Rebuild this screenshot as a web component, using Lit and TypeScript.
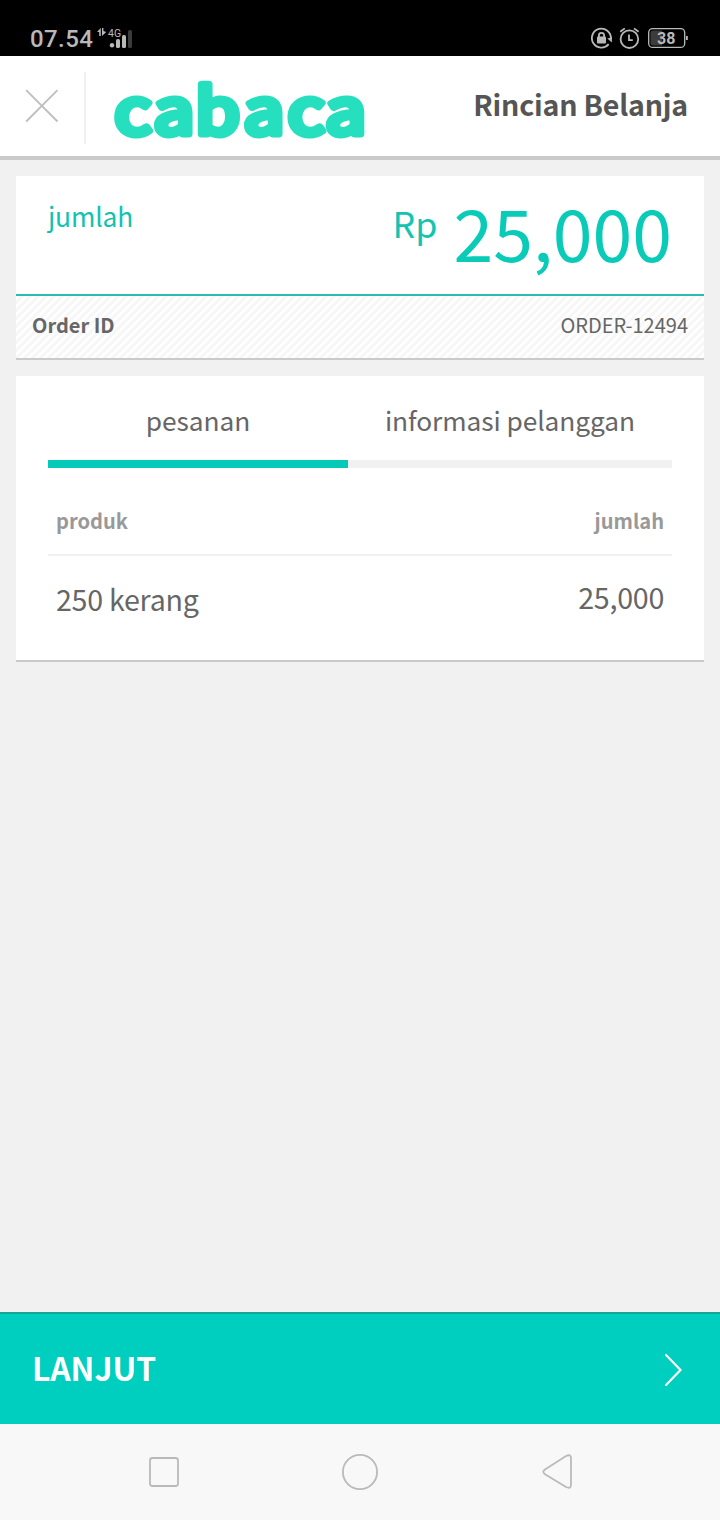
import { LitElement, html, css } from "lit";
import { customElement, property } from "lit/decorators.js";

@customElement("status-bar")
class StatusBar extends LitElement {
  static styles = css`
    :host { display: flex; height: 56px; box-sizing: border-box; padding: 21px 34px 0 30px; background: #000; color: #b9b9b9; align-items: center; justify-content: space-between; font-family: Roboto, sans-serif; }
    .left, .right { display: flex; align-items: center; height: 35px; }
    .clock { font-size: 24px; font-weight: 500; line-height: 35px; letter-spacing: 0.4px; padding-top: 2px; }
    svg { display: block; }
    .signal { margin-left: 4px; }
    .right { gap: 6px; }
  `;
  render() {
    return html`
      <div class="left">
        <span class="clock">07.54</span>
        <svg class="signal" width="38" height="35" viewBox="97 21 38 35" fill="#b9b9b9">
          <path d="M97 32L100.8 28V36H99.2V32ZM102 28H103.4V31L106.2 32L102 36Z" />
          <text x="108" y="37" font-size="10.5" font-family="Roboto, sans-serif">4G</text>
          <circle cx="112" cy="45.3" r="2.2" />
          <rect x="116" y="39" width="4" height="9" rx="1.6" />
          <rect x="122" y="35" width="4" height="13" rx="1.6" />
          <rect x="128" y="30" width="4" height="18" rx="1.6" fill="#3c3c3c" />
        </svg>
      </div>
      <div class="right">
        <svg width="22" height="35" viewBox="591 21 22 35" fill="none" stroke="#b9b9b9" stroke-width="1.8">
          <path d="M608.7 44.2A9.5 9.5 0 1 1 610.9 38.5" />
          <path d="M607.4 38.6L612 37.2L611.8 42.6Z" fill="#b9b9b9" stroke="none" />
          <rect x="597" y="36.5" width="9" height="7" rx="1" fill="#b9b9b9" stroke="none" />
          <path d="M598.9 37V35.4A2.6 2.6 0 0 1 604.1 35.4V37" />
        </svg>
        <svg width="21" height="35" viewBox="619 21 21 35" fill="none" stroke="#b9b9b9" stroke-width="1.8">
          <circle cx="629.4" cy="39.2" r="8.8" />
          <path d="M629 34.5V40.2H632.8M620.2 31.8L624.8 28.4M634 28.4L638.6 31.8" />
        </svg>
        <svg width="40" height="35" viewBox="646 21 40 35" overflow="visible">
          <rect x="648.7" y="28.6" width="36" height="18.8" rx="4" fill="none" stroke="#b9b9b9" stroke-width="1.3" />
          <path d="M686 36H687.8V40H686Z" fill="#b9b9b9" />
          <path d="M653 30.5H662V45.5H653Q650.5 45.5 650.5 43V33Q650.5 30.5 653 30.5Z" fill="#3c3c3c" />
          <text x="666.2" y="44" text-anchor="middle" font-size="16" font-weight="700" fill="#b9b9b9" font-family="Roboto, sans-serif">38</text>
        </svg>
      </div>
    `;
  }
}

@customElement("shop-header")
class ShopHeader extends LitElement {
  @property() heading = "";
  static styles = css`
    :host { display: flex; height: 104px; box-sizing: border-box; background: #fff; border-bottom: 4px solid #cacaca; align-items: center; padding-right: 32px; }
    svg { display: block; }
    .close { display: flex; justify-content: center; width: 84px; height: 72px; align-items: center; border-right: 2px solid #f0f0f0; box-sizing: content-box; margin-top: 4px; }
    .cross { margin-bottom: 4px; }
    .logo { margin-left: 22px; }
    .title { margin-left: auto; font-size: 28.6px; font-weight: 700; color: #555; line-height: 44px; padding-bottom: 5px; letter-spacing: -0.22px; }
  `;
  render() {
    return html`
      <div class="close">
        <svg class="cross" width="34" height="34" viewBox="0 0 34 34" stroke="#bebebe" stroke-width="1.8"><path d="M1.2 1.2L32.5 32.5M32.5 1.2L1.2 32.5" /></svg>
      </div>
      <svg class="logo" width="264" height="100" viewBox="108 56 264 100">
        <text transform="scale(1.16 1)" y="134.4" x="98.8 132.5 168.4 210.1 248 280.6" font-family="'Noto Sans CJK SC', sans-serif" font-weight="400" font-size="62" fill="#26dfbf" stroke="#26dfbf" stroke-width="7" stroke-linejoin="round">cabaca</text>
      </svg>
      <span class="title">${this.heading}</span>
    `;
  }
}

@customElement("amount-card")
class AmountCard extends LitElement {
  static styles = css`
    :host { display: block; background: #fff; border-bottom: 2px solid #cacaca; }
    .total { display: flex; justify-content: space-between; align-items: flex-start; height: 120px; box-sizing: border-box; padding: 0 32px; border-bottom: 2px solid #2bbcab; }
    .label { font-size: 26.4px; line-height: 40px; color: #12c2b1; padding-top: 20px; letter-spacing: -0.15px; }
    .sum { display: flex; align-items: flex-start; color: #0acab8; }
    .currency { font-size: 35.8px; line-height: 50px; padding-top: 21px; color: #14c4b2; }
    .value { font-size: 71.6px; line-height: 80px; padding-top: 15px; margin-left: 16px; }
    .order { display: flex; justify-content: space-between; align-items: center; height: 62px; box-sizing: border-box; padding: 0 16px 6px; color: #666; font-size: 20px; background: linear-gradient(135deg, #fff 25%, #f7f7f7 25%, #f7f7f7 50%, #fff 50%, #fff 75%, #f7f7f7 75%) 0 0 / 8px 8px; }
    .key { font-weight: 700; }
  `;
  render() {
    return html`
      <div class="total">
        <span class="label">jumlah</span>
        <div class="sum"><span class="currency">Rp</span><span class="value">25,000</span></div>
      </div>
      <div class="order"><span class="key">Order ID</span><span class="id">ORDER-12494</span></div>
    `;
  }
}

@customElement("order-card")
class OrderCard extends LitElement {
  static styles = css`
    :host { display: block; height: 286px; box-sizing: border-box; background: #fff; border-bottom: 2px solid #cacaca; padding: 0 32px; color: #666; }
    .tabs { display: grid; grid-template-columns: 300px 324px; }
    .tab { height: 92px; box-sizing: border-box; border-bottom: 8px solid #f1f1f1; text-align: center; font-size: 26.3px; line-height: 40px; padding-top: 24px; letter-spacing: -0.07px; }
    .active { border-color: #06cab8; }
    .row { display: flex; justify-content: space-between; padding: 0 8px; }
    .head { height: 88px; box-sizing: border-box; border-bottom: 2px solid #f0f0f0; padding-top: 37px; font-size: 20.1px; font-weight: 700; line-height: 32px; color: #999; }
    .item { font-size: 28.6px; line-height: 44px; padding-top: 21px; letter-spacing: -0.25px; }
    .price { margin-top: -2px; }
  `;
  render() {
    return html`
      <div class="tabs"><div class="tab active">pesanan</div><div class="tab">informasi pelanggan</div></div>
      <div class="row head"><span>produk</span><span>jumlah</span></div>
      <div class="row item"><span class="name">250 kerang</span><span class="price">25,000</span></div>
    `;
  }
}

@customElement("app-root")
class AppRoot extends LitElement {
  static styles = css`
    :host { display: flex; flex-direction: column; height: 1520px; background: #f1f1f1; font-family: "Noto Sans CJK SC", "Noto Sans CJK JP", sans-serif; }
    .content { flex: 1; display: flex; flex-direction: column; gap: 16px; padding: 16px; }
    .next { display: flex; align-items: center; justify-content: space-between; height: 112px; box-sizing: border-box; background: #00cebe; border-top: 2px solid #16a596; color: #fff; padding: 0 37px 0 32px; }
    .cta { font-size: 31.8px; font-weight: 700; line-height: 48px; padding-bottom: 4px; }
    .nav { display: flex; height: 96px; background: #f8f8f8; align-items: center; justify-content: center; gap: 160px; }
    svg { display: block; }
  `;
  render() {
    return html`
      <status-bar></status-bar>
      <shop-header heading="Rincian Belanja"></shop-header>
      <main class="content"><amount-card></amount-card><order-card></order-card></main>
      <div class="next">
        <span class="cta">LANJUT</span>
        <svg width="20" height="36" viewBox="0 0 20 36" fill="none" stroke="#fff" stroke-width="2.2" stroke-linecap="round"><path d="M3 4L17.5 19L3 34" /></svg>
      </div>
      <div class="nav">
        <svg width="36" height="36" viewBox="0 0 36 36" fill="none" stroke="#bababa" stroke-width="1.8"><rect x="4" y="4" width="28" height="28" rx="2.5" /></svg>
        <svg width="36" height="36" viewBox="0 0 36 36" fill="none" stroke="#bababa" stroke-width="1.8"><circle cx="18" cy="18" r="17.1" /></svg>
        <svg width="36" height="36" viewBox="0 0 36 36" fill="none" stroke="#bababa" stroke-width="1.8"><path d="M7 15.4L28 2Q33 -.2 33 4V31Q33 35.2 28 33L7 20.2Q3.6 17.8 7 15.4Z" /></svg>
      </div>
    `;
  }
}
